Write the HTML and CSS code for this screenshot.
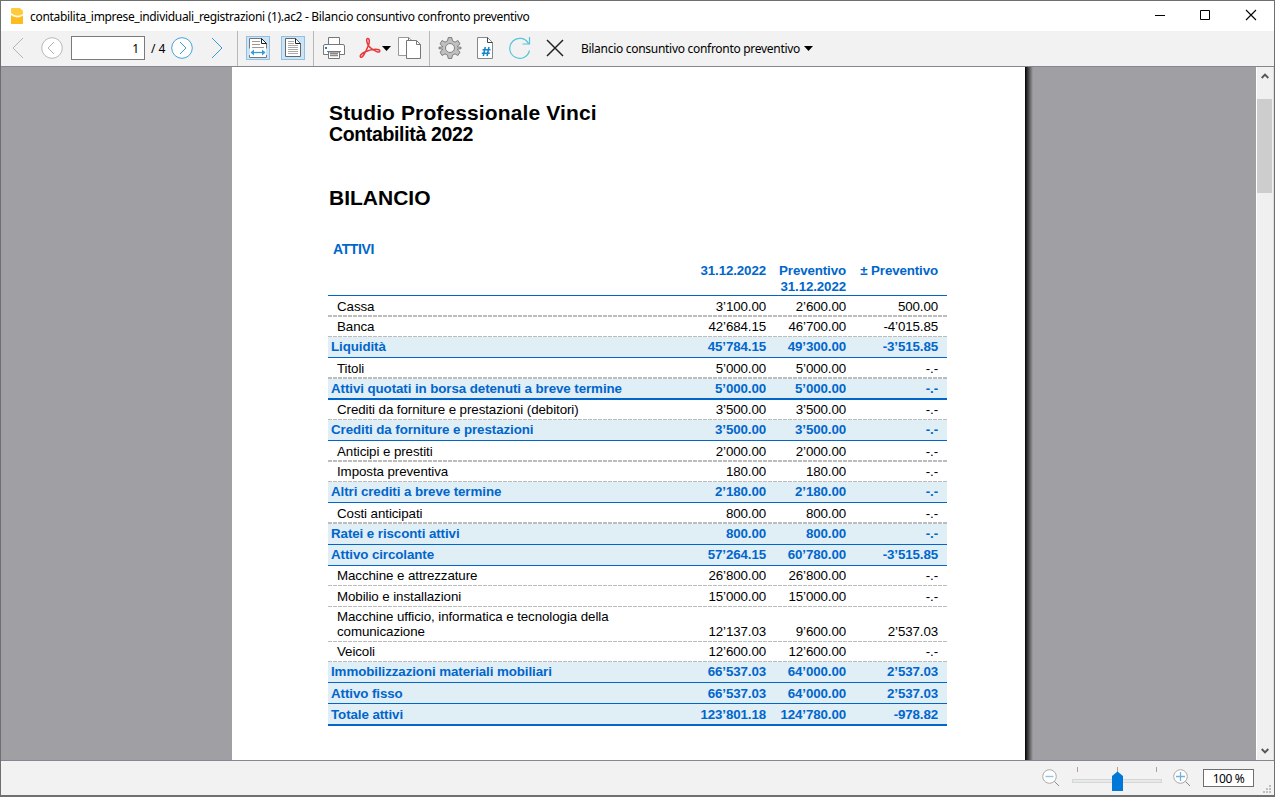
FILE: index.html
```html
<!DOCTYPE html>
<html lang="it">
<head>
<meta charset="utf-8">
<title>Bilancio consuntivo confronto preventivo</title>
<link rel="stylesheet" href="styles.css">
</head>
<body>
<div class="window">
  <header class="titlebar">
    <svg class="logo" width="12" height="16" viewBox="0 0 12 16"><path d="M1 0H9L12 3V16H1Q0 16 0 15V1Q0 0 1 0Z" fill="#ffcb3d"/><path d="M0 8Q6 11 12 7V15Q12 16 11 16H1Q0 16 0 15Z" fill="#fdbb20"/><path d="M0 5Q6 10 12 6V7.500Q6 11.500 0 7Z" fill="#fffbe8"/></svg>
    <span class="caption">contabilita_imprese_individuali_registrazioni (1).ac2 - Bilancio consuntivo confronto preventivo</span>
    <div class="controls">
      <svg class="minimize" width="12" height="12" viewBox="0 0 12 12"><path d="M1 6.500H11" stroke="#000"/></svg>
      <svg width="12" height="12" viewBox="0 0 12 12"><path d="M1.500 1.500H10.500V10.500H1.500Z" fill="none" stroke="#000"/></svg>
      <svg width="12" height="12" viewBox="0 0 12 12"><path d="M1 1L11 11M11 1L1 11" stroke="#000" stroke-width="1.100"/></svg>
    </div>
  </header>

  <nav class="toolbar">
    <div class="group pager">
      <svg class="first" width="12" height="22" viewBox="0 0 12 22"><path d="M11 1L1 11L11 21" fill="none" stroke="#b4b4b4"/></svg>
      <svg class="prev" width="22" height="22" viewBox="0 0 22 22"><circle cx="11" cy="11" r="10.300" fill="#fff" stroke="#b9b9b9"/><path d="M13 5L7 11L13 17" fill="none" stroke="#b4b4b4"/></svg>
      <span class="page-input">1</span>
      <span class="page-total">/ 4</span>
      <svg class="next" width="22" height="22" viewBox="0 0 22 22"><circle cx="11" cy="11" r="10.300" fill="#fff" stroke="#4aa3d8"/><path d="M9 5L15 11L9 17" fill="none" stroke="#3c9bd5"/></svg>
      <svg class="last" width="12" height="22" viewBox="0 0 12 22"><path d="M1 1L11 11L1 21" fill="none" stroke="#3c9bd5"/></svg>
    </div>
    <div class="group view">
      <span class="toggle"><svg width="22" height="22" viewBox="0 0 22 22"><path d="M2.500 11.500V1.500H14.500L19.500 6.500V11.500M2.500 18V20.500H19.500V18" fill="#fff" stroke="#777"/><path d="M3 6.500H19V20H3Z" fill="#fff"/><path d="M14.500 1.500V6.500H19.500Z" fill="#fff" stroke="#222"/><path d="M5 4.500H13M5 7.500H13M5 10.500H17" stroke="#999"/><path d="M4.500 15.500H17.500" stroke="#3c9bd5" stroke-width="1.300"/><path d="M3.500 15.500L7 12.500V18.500ZM18.500 15.500L15 12.500V18.500Z" fill="#3c9bd5"/></svg></span>
      <span class="toggle"><svg width="22" height="22" viewBox="0 0 22 22"><path d="M3.500 1.500H13.500L18.500 6.500V19.500H3.500Z" fill="#fff" stroke="#666"/><path d="M13.500 1.500V6.500H18.500" fill="none" stroke="#222"/><path d="M6 4.500H12M6 6.500H12M6 8.500H16M6 10.500H16M6 12.500H16M6 14.500H16M6 16.500H16" stroke="#aaa"/></svg></span>
    </div>
    <div class="group output">
      <svg width="24" height="24" viewBox="0 0 24 24"><path d="M6.500 9V1.500H17.500V9" fill="#fff" stroke="#777"/><path d="M1.500 10Q1.500 8.500 3 8.500H21Q22.500 8.500 22.500 10V18.500H1.500Z" fill="#fff" stroke="#777"/><rect x="3" y="11" width="2" height="2" fill="#1683c8"/><path d="M5 15.500H19" stroke="#777"/><path d="M6.500 16H17.500V22.500H6.500Z" fill="#fff" stroke="#777"/><path d="M8 17.500H16M8 19.500H16" stroke="#888" stroke-width="1.500"/></svg>
      <svg class="pdf" width="22" height="22" viewBox="0 0 22 22"><path d="M9.300 8.500C7.500 5 7 1.500 8.800 1.500C10.700 1.500 10.700 5.500 9.300 8.500C8 12 6.500 15 5 17.500C3.500 20 1.800 21 1.300 19.800C.8 18 3.500 16 7 14.500C10 13.200 13.500 12.400 16.500 12.300C19.500 12.300 21 13 20.800 14.200C20.400 15.800 17.500 15 14.500 13C12.300 11.500 10.300 10 9.300 8.500Z" fill="none" stroke="#e8383a" stroke-width="1.500"/></svg>
      <svg class="drop" width="9" height="5" viewBox="0 0 9 5"><path d="M0 0H9L4.500 5Z"/></svg>
      <svg class="copy" width="24" height="24" viewBox="0 0 24 24"><path d="M.5 1.500H10.500L14.500 5V19.500H.5Z" fill="#fff" stroke="#999"/><path d="M10.500 1.500V5.500H14" fill="none" stroke="#777"/><path d="M8.500 4.500H18.500L22.500 8.500V22.500H8.500Z" fill="#fff" stroke="#777"/><path d="M18.500 4.500V8.500H22.500" fill="none" stroke="#777"/></svg>
    </div>
    <div class="group actions">
      <svg width="24" height="24" viewBox="0 0 24 24"><path d="M9.500 4.800L10.300 1.500H13.700L14.500 4.800L17 6.200L19.900 4.500L22 7.800L19.500 10.200V11L23 11.200V12.800L19.500 13V13.800L22 16.200L19.900 19.500L17 17.800L14.500 19.200L13.700 22.500H10.300L9.500 19.200L7 17.800L4.100 19.500L2 16.200L4.500 13.800V13L1 12.800V11.200L4.500 11V10.200L2 7.800L4.100 4.500L7 6.200Z" fill="#c0c0c0" stroke="#7c7c7c" stroke-linejoin="round"/><circle cx="12" cy="12" r="4.500" fill="#f4f4f4" stroke="#808080"/></svg>
      <svg class="sheet" width="18" height="24" viewBox="0 0 18 24"><path d="M1.500 1.500H11.500L16.500 6.500V22.500H1.500Z" fill="#fff" stroke="#888"/><path d="M11.500 1.500V6.500H16.500" fill="none" stroke="#444"/><path d="M9.300 11L7.300 20M13 11L11 20M6.500 13.800H14.500M5.800 17.300H13.800" stroke="#1683c8" stroke-width="1.500"/></svg>
      <svg class="reload" width="24" height="24" viewBox="0 0 24 24"><path d="M21.500 14.500A10 10 0 1 1 20.500 7.500M21.500 1V8H14.500" fill="none" stroke="#55c3d8" stroke-width="1.200"/></svg>
      <svg class="cancel" width="18" height="18" viewBox="0 0 18 18"><path d="M1 1L17 17M17 1L1 17" stroke="#222" stroke-width="1.500"/></svg>
      <span class="report">Bilancio consuntivo confronto preventivo</span>
      <svg class="drop" width="9" height="5" viewBox="0 0 9 5"><path d="M0 0H9L4.500 5Z"/></svg>
    </div>
  </nav>

  <main class="viewer">
    <article class="page">
      <h1 class="company">Studio Professionale Vinci</h1>
      <h2 class="period">Contabilità 2022</h2>
      <h2 class="heading">BILANCIO</h2>
      <h3 class="section">ATTIVI</h3>
      <div class="sheet-table">
        <div class="row head"><span></span><span>31.12.2022</span><span>Preventivo<br>31.12.2022</span><span>± Preventivo</span></div>
        <div class="row item thick low"><span>Cassa</span><span>3’100.00</span><span>2’600.00</span><span>500.00</span></div>
        <div class="row item"><span>Banca</span><span>42’684.15</span><span>46’700.00</span><span>-4’015.85</span></div>
        <div class="row total"><span>Liquidità</span><span>45’784.15</span><span>49’300.00</span><span>-3’515.85</span></div>
        <div class="row item thick low"><span>Titoli</span><span>5’000.00</span><span>5’000.00</span><span>-.-</span></div>
        <div class="row total thick"><span>Attivi quotati in borsa detenuti a breve termine</span><span>5’000.00</span><span>5’000.00</span><span>-.-</span></div>
        <div class="row item"><span>Crediti da forniture e prestazioni (debitori)</span><span>3’500.00</span><span>3’500.00</span><span>-.-</span></div>
        <div class="row total"><span>Crediti da forniture e prestazioni</span><span>3’500.00</span><span>3’500.00</span><span>-.-</span></div>
        <div class="row item thick low"><span>Anticipi e prestiti</span><span>2’000.00</span><span>2’000.00</span><span>-.-</span></div>
        <div class="row item"><span>Imposta preventiva</span><span>180.00</span><span>180.00</span><span>-.-</span></div>
        <div class="row total"><span>Altri crediti a breve termine</span><span>2’180.00</span><span>2’180.00</span><span>-.-</span></div>
        <div class="row item thick low"><span>Costi anticipati</span><span>800.00</span><span>800.00</span><span>-.-</span></div>
        <div class="row total"><span>Ratei e risconti attivi</span><span>800.00</span><span>800.00</span><span>-.-</span></div>
        <div class="row total"><span>Attivo circolante</span><span>57’264.15</span><span>60’780.00</span><span>-3’515.85</span></div>
        <div class="row item"><span>Macchine e attrezzature</span><span>26’800.00</span><span>26’800.00</span><span>-.-</span></div>
        <div class="row item tall low"><span>Mobilio e installazioni</span><span>15’000.00</span><span>15’000.00</span><span>-.-</span></div>
        <div class="row item double"><span>Macchine ufficio, informatica e tecnologia della<br>comunicazione</span><span>12’137.03</span><span>9’600.00</span><span>2’537.03</span></div>
        <div class="row item"><span>Veicoli</span><span>12’600.00</span><span>12’600.00</span><span>-.-</span></div>
        <div class="row total"><span>Immobilizzazioni materiali mobiliari</span><span>66’537.03</span><span>64’000.00</span><span>2’537.03</span></div>
        <div class="row total low"><span>Attivo fisso</span><span>66’537.03</span><span>64’000.00</span><span>2’537.03</span></div>
        <div class="row total thick low last-row"><span>Totale attivi</span><span>123’801.18</span><span>124’780.00</span><span>-978.82</span></div>
      </div>
    </article>
    <div class="page-shadow"></div>
    <div class="scrollbar">
      <svg width="8" height="6" viewBox="0 0 8 6"><path d="M.7 5L4 1.700L7.300 5" fill="none" stroke="#555" stroke-width="1.900"/></svg>
      <div class="thumb"></div>
      <svg class="down" width="8" height="6" viewBox="0 0 8 6"><path d="M.7 1L4 4.300L7.300 1" fill="none" stroke="#555" stroke-width="1.900"/></svg>
    </div>
  </main>

  <footer class="status">
    <svg class="zoom-out" width="18" height="18" viewBox="0 0 18 18"><circle cx="7.500" cy="7.500" r="6.800" fill="#fff" stroke="#aaa"/><path d="M12.500 12.500L17 17" stroke="#888"/><path d="M3.500 7.500H11.500" stroke="#8fc5e6" stroke-width="1.400"/></svg>
    <svg class="slider" width="92" height="28" viewBox="0 0 92 28"><path d="M6.500 3V8M46.500 3V8M85.500 3V8" stroke="#a8a296"/><rect x="1.500" y="15.500" width="89" height="3" fill="#e7eaea" stroke="#d6d6d6"/><path d="M41 27V12L46.500 7.500L52 12V27Z" fill="#0078d7"/></svg>
    <svg class="zoom-in" width="18" height="18" viewBox="0 0 18 18"><circle cx="7.500" cy="7.500" r="6.800" fill="#fff" stroke="#aaa"/><path d="M12.500 12.500L17 17" stroke="#888"/><path d="M3 7.500H12M7.500 3V12" stroke="#6fb3de" stroke-width="1.300"/></svg>
    <span class="zoom-value">100 %</span>
    <svg class="grip" width="9" height="9" viewBox="0 0 9 9"><path d="M6 0h2v2H6zM3 3h2v2H3zM6 3h2v2H6zM0 6h2v2H0zM3 6h2v2H3zM6 6h2v2H6z" fill="#bfbfbf"/></svg>
  </footer>
</div>
</body>
</html>
```

FILE: styles.css
```css
* { box-sizing: border-box; }
body { margin: 0; overflow: hidden; font-family: "Noto Sans", sans-serif; font-size: 12px; color: #000; }
svg { display: block; flex: none; }
.window { width: 1275px; height: 797px; display: flex; flex-direction: column; border: 1px solid #6f6f70; border-bottom-width: 2px; background: #f2f2f2; }

.titlebar { height: 30px; flex: none; display: flex; align-items: center; background: #fff; padding: 0 17px 0 10px; }
.logo { margin-top: -1px; }
.caption { margin-left: 7px; font-size: 12px; letter-spacing: -0.31px; white-space: nowrap; }
.controls { display: flex; gap: 34px; margin-left: auto; margin-top: -2px; }
.minimize { margin-right: -1px; }

.toolbar { height: 36px; flex: none; display: flex; border-bottom: 1px solid #828790; background: #f2f2f2; }
.group { display: flex; align-items: center; height: 35px; padding-bottom: 1px; }
.group + .group { border-left: 1px solid #b8b8b8; }
.pager { width: 236px; padding-left: 11px; }
.prev { margin-left: 17px; }
.page-input { width: 74px; height: 24px; margin-left: 8px; padding-right: 5px; border: 1px solid #7a7a7a; background: #fff; text-align: right; line-height: 24px; }
.page-total { width: 26px; padding-left: 6px; white-space: nowrap; }
.last { margin-left: 18px; }
.view { width: 76px; padding-left: 8px; gap: 11px; }
.toggle { width: 24px; height: 24px; border: 1px solid #92c0e0; background: #cce4f7; }
.output { width: 116px; padding-left: 8px; }
.pdf { margin-left: 13px; }
.pdf + .drop { margin-left: 1px; }
.copy { margin-left: 7px; }
.actions { padding-left: 8px; }
.sheet { margin-left: 14px; }
.reload { margin-left: 14px; }
.cancel { margin-left: 14px; }
.report { width: 219px; margin-left: 17px; font-size: 12px; letter-spacing: -0.29px; white-space: nowrap; }
.actions .drop { margin-left: 4px; }

.viewer { flex: 1; min-height: 0; display: flex; background: #a0a0a4; padding-left: 231px; border-bottom: 1px solid #828790; }
.page { width: 793px; background: #fff; padding: 34px 78px 0 96px; font-family: "Liberation Sans", sans-serif; overflow: hidden; }
.page-shadow { width: 8px; background: linear-gradient(90deg, #000, #2a2a2b 25%, #a0a0a4); }
h1, h2, h3 { margin: 0; padding-left: 1px; font-weight: bold; white-space: nowrap; }
.company { font-size: 21px; line-height: 24px; letter-spacing: 0.12px; }
.period { font-size: 19.5px; line-height: 19px; letter-spacing: -0.35px; }
.heading { margin-top: 42px; font-size: 21px; line-height: 24px; }
.section { margin-top: 31px; padding-left: 5px; font-size: 14px; line-height: 16px; color: #0066cc; letter-spacing: -0.4px; }

.sheet-table { font-size: 13.33px; margin-top: 1px; }
.row { display: grid; grid-template-columns: 356px 80px 80px 92px; align-items: start; width: 619px; padding: 2px 0 0 2px; line-height: 15px; letter-spacing: -0.12px; white-space: nowrap; }
.row span:first-child { letter-spacing: -0.08px; }
.row span:nth-child(n+2) { text-align: right; }
.head { height: 38px; padding-top: 5px; line-height: 16px; font-weight: bold; color: #0066cc; border-bottom: 1px solid #0066cc; }
.item { height: 20px; background: repeating-linear-gradient(90deg, #bcbcbc 0 4px, #fff 4px 5px) bottom / 100% 1px no-repeat; }
.item span:first-child { padding-left: 7px; }
.item.thick { height: 21px; background-size: 100% 2px; }
.item.tall { height: 21px; }
.item.double { height: 35px; }
.double span:nth-child(n+2) { padding-top: 15px; }
.total { height: 21px; font-weight: bold; color: #0066cc; background: #e0eef6; border-bottom: 1px solid #0066cc; }
.total span:first-child { padding-left: 1px; }
.total.thick { border-bottom-width: 2px; }
.low { padding-top: 3px; }
.total.last-row { height: 22px; }

.scrollbar { width: 18px; margin-left: auto; background: #f0f0f0; border-left: 1px solid #fff; border-right: 1px solid #dcdcdc; display: flex; flex-direction: column; align-items: center; padding: 6px 1px 6px 0; }
.thumb { width: 15px; height: 94px; margin-top: 20px; background: #cdcdcd; }
.down { margin-top: auto; }

.status { height: 34px; flex: none; display: flex; align-items: center; padding-left: 1041px; }
.slider { margin-left: 11px; }
.zoom-in { margin-left: 10px; }
.zoom-value { width: 51px; height: 18px; margin-left: 12px; border: 1px solid #6e6e6e; background: #fff; text-align: center; line-height: 17px; letter-spacing: -0.4px; }
.grip { align-self: flex-end; margin: 0 0 1px 9px; }
```
